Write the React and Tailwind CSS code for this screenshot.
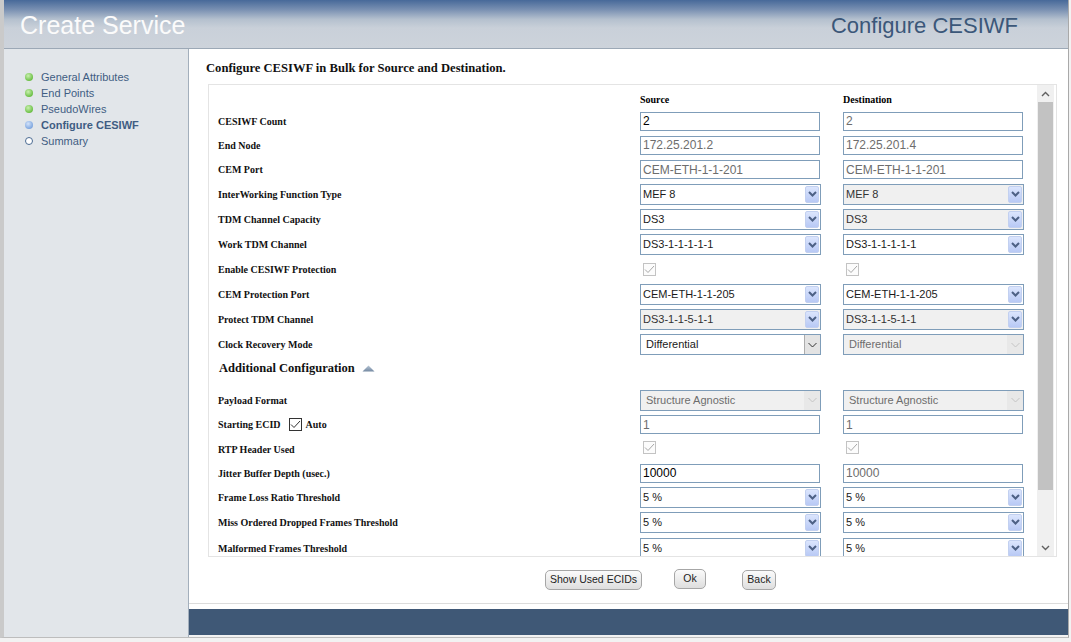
import React from "react";

const serif = "font-['Liberation_Serif','Times_New_Roman',serif]";

function Chev({ color = "#4d6185", w = 2 }) {
  return (
    <svg width="9" height="6" viewBox="0 0 9 6">
      <path d="M1 1 L4.5 4.5 L8 1" fill="none" stroke={color} strokeWidth={w} />
    </svg>
  );
}

function ThinChev({ color = "#333" }) {
  return (
    <svg width="9" height="6" viewBox="0 0 9 6">
      <path d="M0.5 1 L4.5 5 L8.5 1" fill="none" stroke={color} strokeWidth="1" />
    </svg>
  );
}

function Sel({ value, variant = "xp" }) {
  if (variant === "xp" || variant === "xpGray") {
    return (
      <div
        className={
          "w-[181px] h-[21px] border border-[#7f9db9] flex items-center text-[11px] " +
          (variant === "xp" ? "bg-white text-[#1a1a1a]" : "bg-[#f0f0f0] text-[#333]")
        }
      >
        <span className="flex-1 pl-[2px] leading-none">{value}</span>
        <div className="w-[14px] h-[17px] mr-[1px] rounded-[2px] border border-[#c2d0f0] bg-[linear-gradient(to_bottom,#dbe5fd,#b8c9f5)] flex items-center justify-center">
          <Chev />
        </div>
      </div>
    );
  }
  if (variant === "win") {
    return (
      <div className="w-[181px] h-[21px] border border-[#7f9db9] bg-white flex items-center text-[11px] text-[#1a1a1a]">
        <span className="flex-1 pl-[5px] leading-none">{value}</span>
        <div className="w-[16px] h-[19px] border-l border-[#acacac] bg-[#e3e3e3] flex items-center justify-center">
          <ThinChev />
        </div>
      </div>
    );
  }
  return (
    <div className="w-[181px] h-[21px] border border-[#7f9db9] bg-[#f0f0f0] flex items-center text-[11px] text-[#6d6d6d]">
      <span className="flex-1 pl-[5px] leading-none">{value}</span>
      <div className="w-[16px] h-[19px] bg-[#e8e8e8] flex items-center justify-center">
        <ThinChev color="#c4c4c4" />
      </div>
    </div>
  );
}

function Inp({ value, dark = false }) {
  return (
    <div
      className={
        "w-[180px] h-[19px] border border-[#7f9db9] bg-white flex items-center pl-[2px] text-[12px] leading-none " +
        (dark ? "text-black" : "text-[#6d6d6d]")
      }
    >
      {value}
    </div>
  );
}

function Chk({ dark = false }) {
  return (
    <div
      className={
        "w-[13px] h-[13px] border flex items-center justify-center " +
        (dark ? "border-[#333] bg-white" : "border-[#c3c3c3] bg-[#fcfcfc]")
      }
    >
      <svg width="11" height="9" viewBox="0 0 11 9">
        <path d="M1 4.5 L4 7.5 L10 1" fill="none" stroke={dark ? "#333" : "#a8a8a8"} strokeWidth="1" />
      </svg>
    </div>
  );
}

const rows = [
  { h: "h-[24px]", label: "CESIWF Count", src: <Inp value="2" dark />, dst: <Inp value="2" /> },
  { h: "h-[24px]", label: "End Node", src: <Inp value="172.25.201.2" />, dst: <Inp value="172.25.201.4" /> },
  { h: "h-[25px]", label: "CEM Port", src: <Inp value="CEM-ETH-1-1-201" />, dst: <Inp value="CEM-ETH-1-1-201" /> },
  { h: "h-[24px]", label: "InterWorking Function Type", src: <Sel value="MEF 8" />, dst: <Sel value="MEF 8" variant="xpGray" /> },
  { h: "h-[26px]", label: "TDM Channel Capacity", src: <Sel value="DS3" />, dst: <Sel value="DS3" variant="xpGray" /> },
  { h: "h-[25px]", label: "Work TDM Channel", src: <Sel value="DS3-1-1-1-1-1" />, dst: <Sel value="DS3-1-1-1-1-1" /> },
  { h: "h-[24px]", label: "Enable CESIWF Protection", src: <div className="pl-[3px]"><Chk /></div>, dst: <div className="pl-[3px]"><Chk /></div> },
  { h: "h-[26px]", label: "CEM Protection Port", src: <Sel value="CEM-ETH-1-1-205" />, dst: <Sel value="CEM-ETH-1-1-205" /> },
  { h: "h-[24px]", label: "Protect TDM Channel", src: <Sel value="DS3-1-1-5-1-1" variant="xpGray" />, dst: <Sel value="DS3-1-1-5-1-1" variant="xpGray" /> },
  { h: "h-[27px]", label: "Clock Recovery Mode", src: <Sel value="Differential" variant="win" />, dst: <Sel value="Differential" variant="winGray" /> },
];

const rows2 = [
  { h: "h-[24px]", label: "Payload Format", src: <Sel value="Structure Agnostic" variant="winGray" />, dst: <Sel value="Structure Agnostic" variant="winGray" /> },
  {
    h: "h-[25px]",
    label: (
      <span className="flex items-center">
        Starting ECID
        <span className="ml-[8px] mr-[4px]"><Chk dark /></span>
        Auto
      </span>
    ),
    src: <Inp value="1" />,
    dst: <Inp value="1" />,
  },
  { h: "h-[24px]", label: "RTP Header Used", src: <div className="pl-[3px] pb-[3px]"><Chk /></div>, dst: <div className="pl-[3px] pb-[3px]"><Chk /></div> },
  { h: "h-[24px]", label: "Jitter Buffer Depth (usec.)", src: <Inp value="10000" dark />, dst: <Inp value="10000" /> },
  { h: "h-[24px]", label: "Frame Loss Ratio Threshold", src: <Sel value="5 %" />, dst: <Sel value="5 %" /> },
  { h: "h-[26px]", label: "Miss Ordered Dropped Frames Threshold", src: <Sel value="5 %" />, dst: <Sel value="5 %" /> },
  { h: "h-[26px]", label: "Malformed Frames Threshold", src: <Sel value="5 %" />, dst: <Sel value="5 %" /> },
];

function Row({ r }) {
  return (
    <div className={"flex items-center shrink-0 " + r.h}>
      <div className={"w-[422px] text-[10px] font-bold text-[#111] " + serif}>{r.label}</div>
      <div className="w-[181px]">{r.src}</div>
      <div className="w-[22px]" />
      <div className="w-[181px]">{r.dst}</div>
    </div>
  );
}

function Bullet({ kind }) {
  if (kind === "done")
    return <span className="w-[8px] h-[8px] rounded-full bg-[radial-gradient(circle_at_40%_35%,#c9f0b0,#6cc046_70%,#58a835)]" />;
  if (kind === "cur")
    return <span className="w-[8px] h-[8px] rounded-full bg-[radial-gradient(circle_at_40%_35%,#d3e3fa,#7fa7e0_70%,#5d87c6)]" />;
  return <span className="w-[8px] h-[8px] rounded-full border-[1.5px] border-[#4b6b92] bg-white" />;
}

export default function App() {
  const nav = [
    ["General Attributes", "done"],
    ["End Points", "done"],
    ["PseudoWires", "done"],
    ["Configure CESIWF", "cur"],
    ["Summary", "todo"],
  ];
  return (
    <div className="w-[1071px] h-[642px] bg-[#f2f2f2] overflow-hidden font-['Liberation_Sans',Arial,sans-serif]">
      <div className="w-[1069px] h-[638px] border-l-4 border-l-[#cacaca] border-r border-r-[#a9a9a9] border-b border-b-[#bdbdbd] flex flex-col">
        {/* header */}
        <div className="h-[49px] shrink-0 border-b border-[#9ca8b6] bg-[linear-gradient(to_bottom,#476999_0%,#7990b2_20%,#b4c0ce_40%,#c9d0d9_58%,#cdd3db_100%)] flex items-center justify-between pl-[16px] pr-[50px] pt-[3px]">
          <span className="text-[25px] text-[#fbfbfb] leading-none">Create Service</span>
          <span className="text-[22px] text-[#3b5779] leading-none">Configure CESIWF</span>
        </div>
        {/* body */}
        <div className="flex flex-1">
          {/* sidebar */}
          <div className="w-[185px] shrink-0 bg-[#e2e6ea] border-r border-[#a3afbc] pt-[20px] pl-[21px]">
            {nav.map(([t, k]) => (
              <div key={t} className="h-[16px] flex items-center gap-[8px]">
                <Bullet kind={k} />
                <span className={"text-[11px] text-[#3f5d83] " + (k === "cur" ? "font-bold" : "")}>{t}</span>
              </div>
            ))}
          </div>
          {/* main */}
          <div className="flex-1 flex flex-col">
            <div className="h-[555px] bg-white border-b border-[#dcdcdc] flex flex-col">
              <div className={"pt-[11px] pl-[17px] h-[27px] text-[12.6px] font-bold text-[#111] leading-[16px] " + serif}>
                Configure CESIWF in Bulk for Source and Destination.
              </div>
              <div className="ml-[19px] mt-[8px] w-[849px] h-[473px] border border-[#e4e4e4] flex">
                <div className="flex-1 overflow-hidden pl-[9px] flex flex-col">
                  <div className="h-[24px] shrink-0 flex items-center pt-[4px]">
                    <div className="w-[422px]" />
                    <div className={"w-[181px] text-[10px] font-bold " + serif}>Source</div>
                    <div className="w-[22px]" />
                    <div className={"w-[181px] text-[10px] font-bold " + serif}>Destination</div>
                  </div>
                  {rows.map((r, i) => (
                    <Row key={i} r={r} />
                  ))}
                  <div className="h-[20px] shrink-0 flex items-center">
                    <span className={"text-[12.5px] font-bold text-[#111] pl-[1px] " + serif}>Additional Configuration</span>
                    <svg className="ml-[7px]" width="13" height="7" viewBox="0 0 13 7">
                      <defs>
                        <linearGradient id="tg" x1="0" y1="0" x2="0" y2="1">
                          <stop offset="0" stopColor="#b7c6d6" />
                          <stop offset="1" stopColor="#7489a2" />
                        </linearGradient>
                      </defs>
                      <path d="M6.5 0.5 L12.5 6.5 L0.5 6.5 Z" fill="url(#tg)" />
                    </svg>
                  </div>
                  <div className="h-[10px] shrink-0" />
                  {rows2.map((r, i) => (
                    <Row key={i} r={r} />
                  ))}
                </div>
                {/* scrollbar */}
                <div className="w-[17px] bg-[#f0f0f0] flex flex-col mr-[2px]">
                  <div className="h-[17px] flex items-center justify-center">
                    <svg width="9" height="6" viewBox="0 0 9 6">
                      <path d="M1 5 L4.5 1.5 L8 5" fill="none" stroke="#606060" strokeWidth="1.4" />
                    </svg>
                  </div>
                  <div className="h-[388px] mx-[1px] bg-[#c2c2c2]" />
                  <div className="flex-1" />
                  <div className="h-[17px] flex items-center justify-center">
                    <svg width="9" height="6" viewBox="0 0 9 6">
                      <path d="M1 1 L4.5 4.5 L8 1" fill="none" stroke="#606060" strokeWidth="1.4" />
                    </svg>
                  </div>
                </div>
              </div>
              {/* buttons */}
              <div className="mt-[13px] flex items-start pl-[356px] text-[10.5px] text-[#222]">
                <div className="w-[97px] h-[20px] rounded-[5px] border border-[#a6a6a6] bg-[linear-gradient(to_bottom,#fbfbfb,#dedede)] flex items-center justify-center">
                  Show Used ECIDs
                </div>
                <div className="ml-[32px] -mt-[1px] w-[32px] h-[20px] rounded-[5px] border border-[#a6a6a6] bg-[linear-gradient(to_bottom,#fbfbfb,#dedede)] flex items-center justify-center">
                  Ok
                </div>
                <div className="ml-[36px] w-[34px] h-[20px] rounded-[5px] border border-[#a6a6a6] bg-[linear-gradient(to_bottom,#fbfbfb,#dedede)] flex items-center justify-center">
                  Back
                </div>
              </div>
            </div>
            <div className="h-[5px] bg-white" />
            <div className="h-[26px] bg-[#3f5876]" />
          </div>
        </div>
      </div>
    </div>
  );
}
